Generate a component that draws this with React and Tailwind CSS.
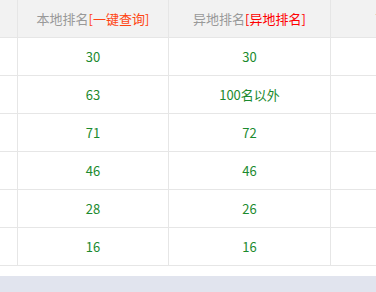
const rows = [
  ["30", "30"],
  ["63", "100名以外"],
  ["71", "72"],
  ["46", "46"],
  ["28", "26"],
  ["16", "16"],
];

export default function App() {
  return (
    <div
      className="w-[376px] h-[292px] overflow-hidden bg-white flex flex-col"
      style={{ fontFamily: '"Microsoft YaHei", "Noto Sans CJK SC", "Noto Sans", sans-serif' }}
    >
      <div className="w-[376px] overflow-hidden">
        <div className="grid grid-cols-[18px_151px_162px_140px] w-[471px] text-[13px]">
          {/* header */}
          <div className="h-[38px] bg-[#f2f2f2] border-r border-b border-[#e6e6e6]" />
          <div className="h-[38px] bg-[#f2f2f2] border-r border-b border-[#e6e6e6] flex items-center justify-center text-[#999]">
            本地排名<span className="text-[#ff4411]">[一键查询]</span>
          </div>
          <div className="h-[38px] bg-[#f2f2f2] border-r border-b border-[#e6e6e6] flex items-center justify-center text-[#999]">
            异地排名<span className="text-[#ff0000]">[异地排名]</span>
          </div>
          <div className="h-[38px] bg-[#f2f2f2] border-b border-[#e6e6e6] flex items-center justify-center text-[#999]">
            百度指数
          </div>

          {rows.map((r, i) => (
            <div key={i} className="contents">
              <div className="h-[38px] border-r border-b border-[#e6e6e6]" />
              <div className="h-[38px] border-r border-b border-[#e6e6e6] flex items-center justify-center text-[#1b8a2e]">
                {r[0]}
              </div>
              <div className="h-[38px] border-r border-b border-[#e6e6e6] flex items-center justify-center text-[#1b8a2e]">
                {r[1]}
              </div>
              <div className="h-[38px] border-b border-[#e6e6e6]" />
            </div>
          ))}
        </div>
      </div>
      <div className="h-[10px]" />
      <div className="flex-1 bg-[#e1e4ee]" />
    </div>
  );
}
